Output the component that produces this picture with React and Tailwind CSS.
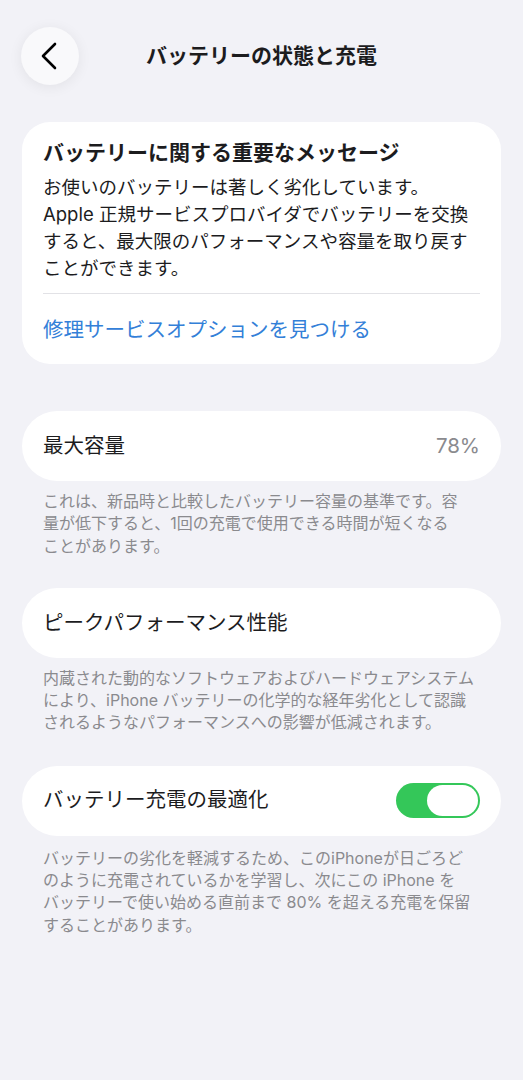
const font = { fontFamily: 'Inter, "Noto Sans CJK JP", sans-serif' };

function Footnote({ lines }) {
  return (
    <div className="px-[21px] pt-[9px] text-[16px] leading-[22.3px] text-[#8a8a8e]">
      {lines.map((line) => (
        <p key={line} className="whitespace-nowrap">
          {line}
        </p>
      ))}
    </div>
  );
}

function Toggle() {
  return (
    <div className="flex h-[35px] w-[84px] items-center justify-end rounded-full bg-[#34c759] px-[2px]">
      <div className="h-[31px] w-[51px] rounded-full bg-white" />
    </div>
  );
}

export default function App() {
  return (
    <div className="min-h-[1080px] w-full bg-[#f2f2f7] text-[#1c1c1e]" style={font}>
      <div className="relative flex h-[112px] items-center justify-center">
        <button className="absolute left-[21px] top-[27px] flex h-[58px] w-[58px] items-center justify-center rounded-full bg-[#f9f9fb] shadow-[0_2px_14px_rgba(0,0,0,0.07)]">
          <svg width="16" height="28" viewBox="0 0 16 28" fill="none" className="-ml-[3px]">
            <polyline
              points="14,2 2,14 14,26"
              stroke="#000"
              strokeWidth="2.6"
              strokeLinecap="round"
              strokeLinejoin="round"
            />
          </svg>
        </button>
        <h1 className="text-[21px] font-bold leading-[26px]">バッテリーの状態と充電</h1>
      </div>

      <div className="px-[22px]">
        <div className="mt-[10px] rounded-[28px] bg-white px-[21px] pt-[18px] pb-[21px]">
          <p className="text-[21px] font-bold leading-[26px]">バッテリーに関する重要なメッセージ</p>
          <div className="mt-[8px] text-[18.5px] leading-[27px]">
            <p className="whitespace-nowrap">お使いのバッテリーは著しく劣化しています。</p>
            <p className="whitespace-nowrap">Apple 正規サービスプロバイダでバッテリーを交換</p>
            <p className="whitespace-nowrap">すると、最大限のパフォーマンスや容量を取り戻す</p>
            <p className="whitespace-nowrap">ことができます。</p>
          </div>
          <div className="mt-[11px] h-px bg-[#e2e2e6]" />
          <p className="mt-[23px] text-[20.5px] leading-[26px] text-[#3380d8]">修理サービスオプションを見つける</p>
        </div>

        <div className="mt-[47px] flex h-[70px] items-center justify-between rounded-full bg-white px-[21px]">
          <span className="text-[20.5px]">最大容量</span>
          <span className="text-[20.5px] text-[#8a8a8e]">78%</span>
        </div>
        <Footnote
          lines={[
            "これは、新品時と比較したバッテリー容量の基準です。容",
            "量が低下すると、1回の充電で使用できる時間が短くなる",
            "ことがあります。",
          ]}
        />

        <div className="mt-[31px] flex h-[70px] items-center rounded-full bg-white px-[21px]">
          <span className="text-[20.5px]">ピークパフォーマンス性能</span>
        </div>
        <Footnote
          lines={[
            "内蔵された動的なソフトウェアおよびハードウェアシステム",
            "により、iPhone バッテリーの化学的な経年劣化として認識",
            "されるようなパフォーマンスへの影響が低減されます。",
          ]}
        />

        <div className="mt-[32px] flex h-[70px] items-center justify-between rounded-full bg-white px-[21px]">
          <span className="text-[20.5px]">バッテリー充電の最適化</span>
          <Toggle />
        </div>
        <div className="pt-[2px]">
          <Footnote
            lines={[
              "バッテリーの劣化を軽減するため、このiPhoneが日ごろど",
              "のように充電されているかを学習し、次にこの iPhone を",
              "バッテリーで使い始める直前まで 80% を超える充電を保留",
              "することがあります。",
            ]}
          />
        </div>
      </div>
    </div>
  );
}
